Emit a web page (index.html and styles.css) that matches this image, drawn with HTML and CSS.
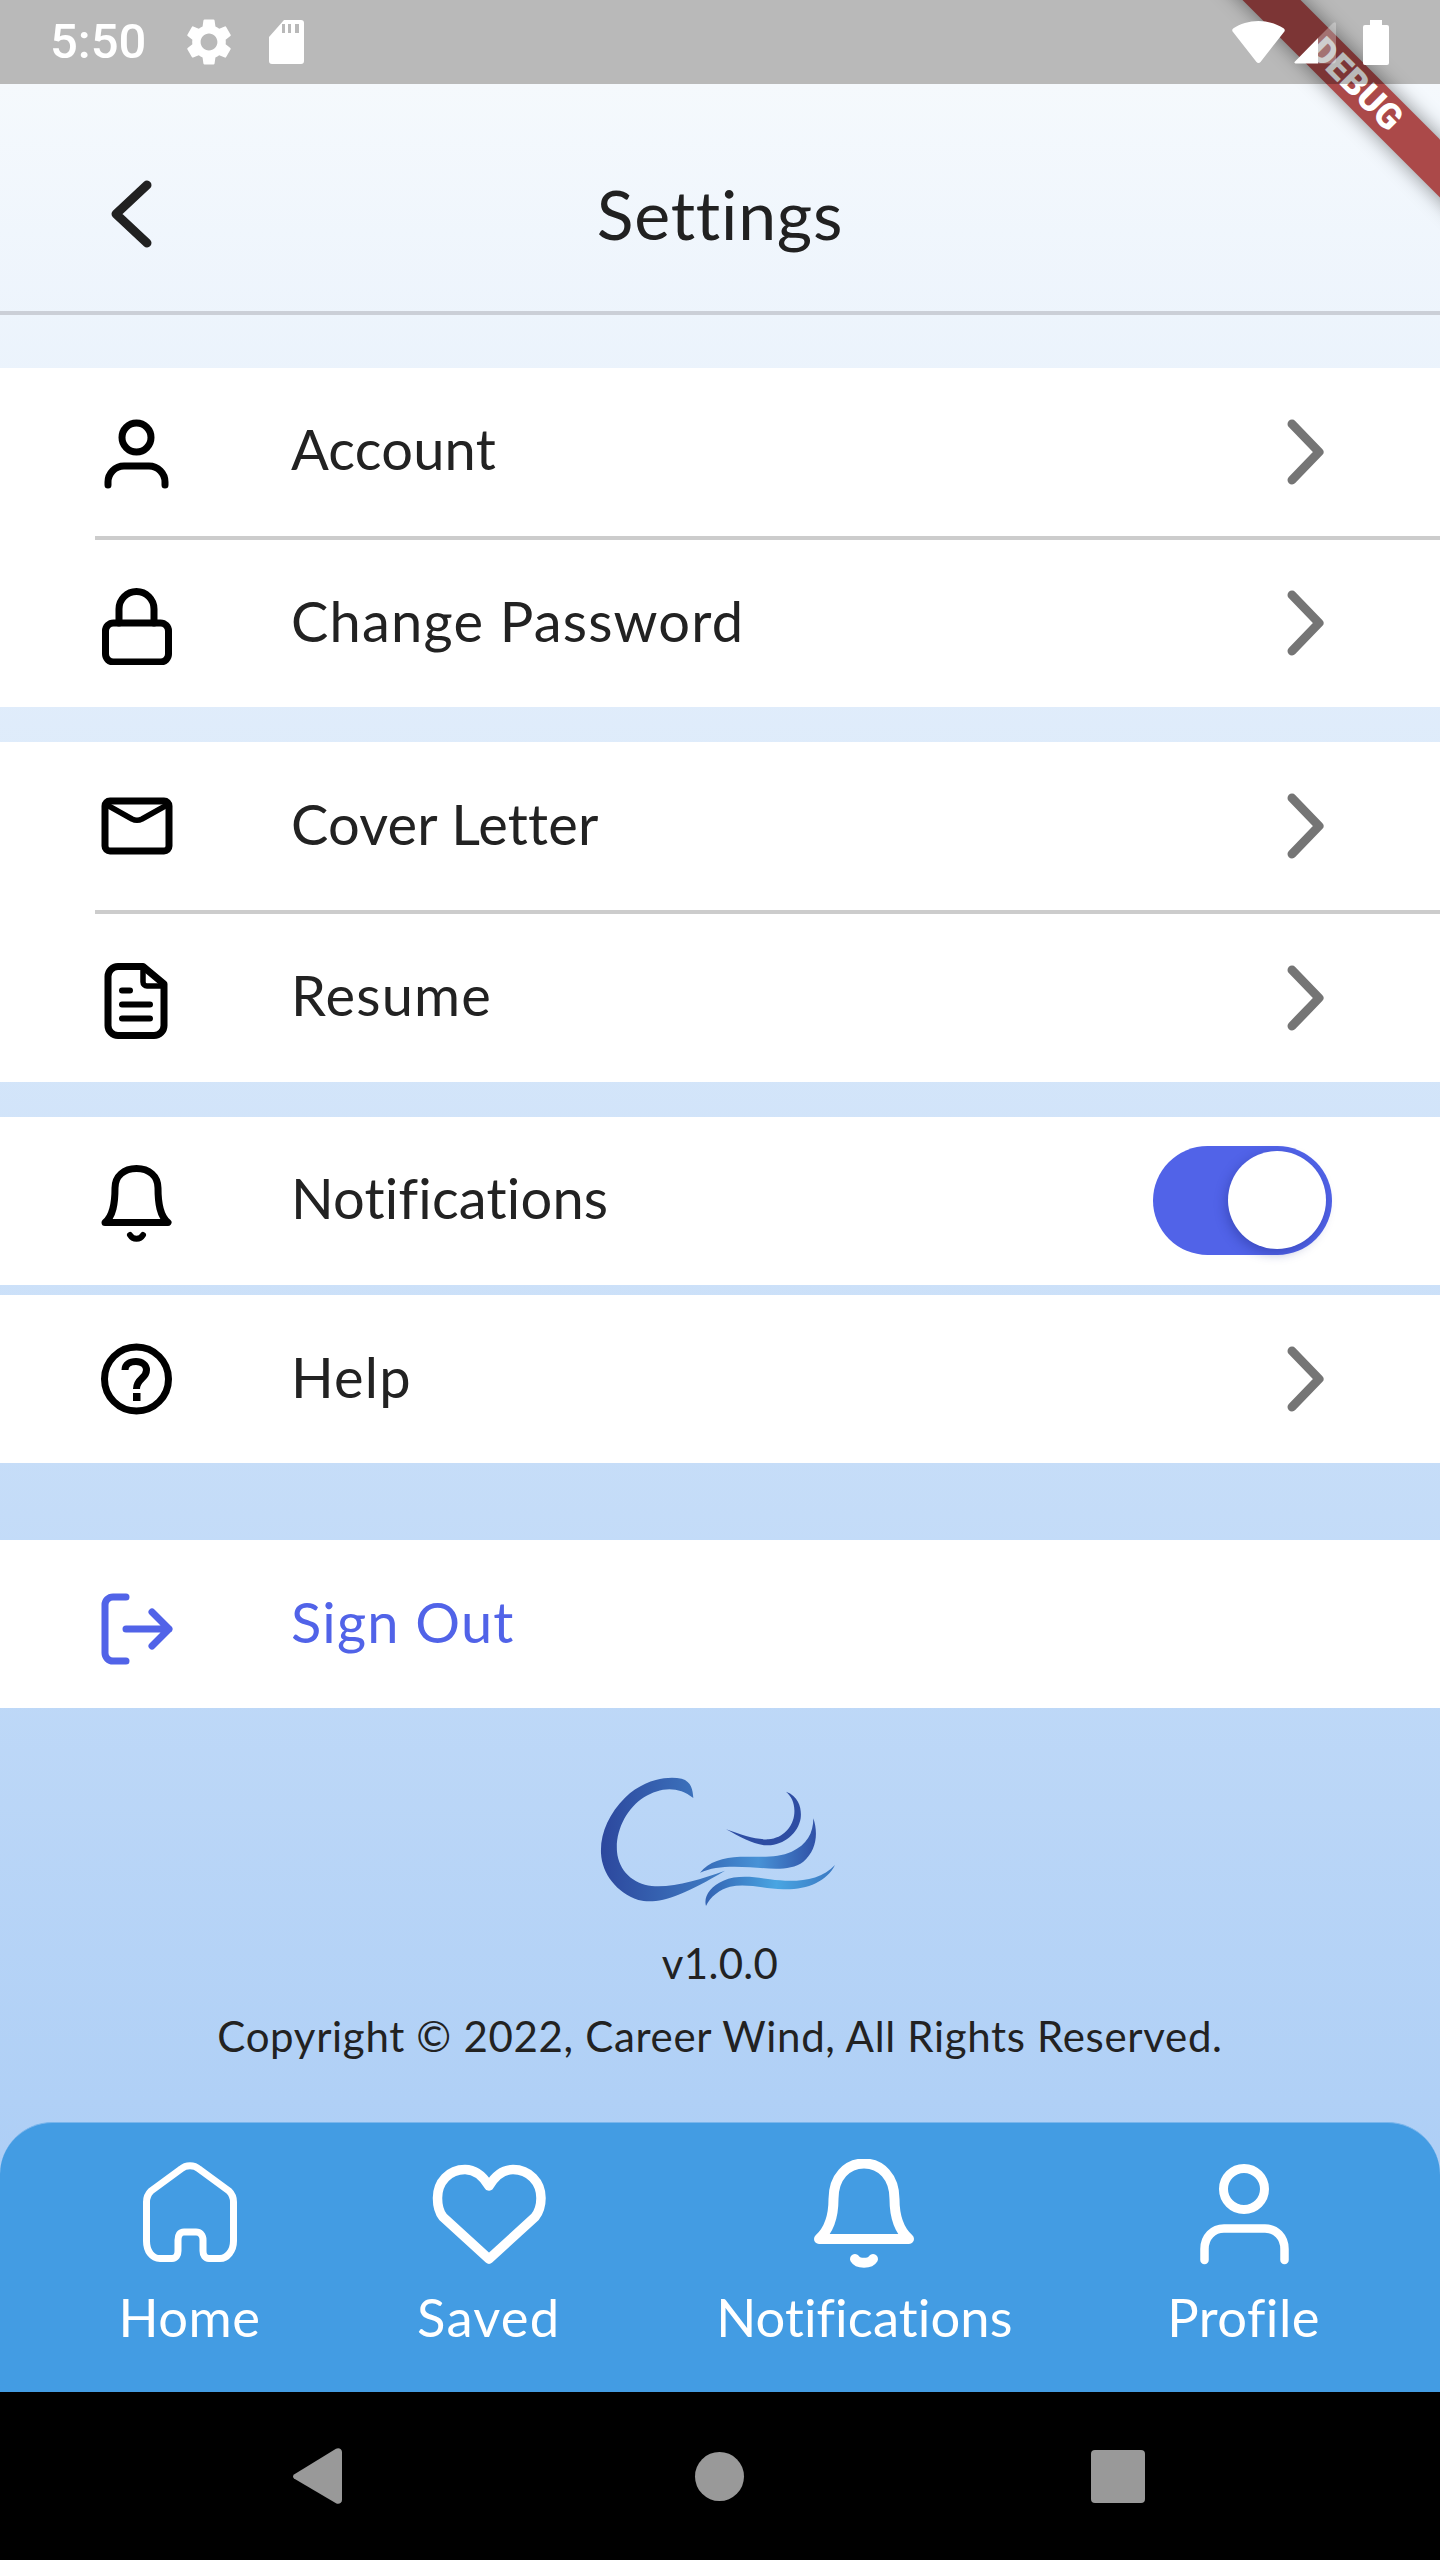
FILE: index.html
```html
<!DOCTYPE html>
<html lang="en">
<head>
<meta charset="utf-8">
<title>Settings</title>
<link rel="stylesheet" href="styles.css">
</head>
<body>
<div class="phone">
  <div class="debug-banner"><span>DEBUG</span></div>

  <div class="status">
    <span class="time">5:50</span>
    <svg class="gear" viewBox="0 0 24 24"><path fill="#fff" d="M19.14 12.94c.04-.3.06-.61.06-.94 0-.32-.02-.64-.07-.94l2.03-1.58a.49.49 0 0 0 .12-.61l-1.92-3.32a.488.488 0 0 0-.59-.22l-2.39.96c-.5-.38-1.03-.7-1.62-.94l-.36-2.54a.484.484 0 0 0-.48-.41h-3.84c-.24 0-.43.17-.47.41l-.36 2.54c-.59.24-1.13.57-1.62.94l-2.39-.96c-.22-.08-.47 0-.59.22L2.74 8.87c-.12.21-.08.47.12.61l2.03 1.58c-.05.3-.09.63-.09.94s.02.64.07.94l-2.03 1.58a.49.49 0 0 0-.12.61l1.92 3.32c.12.22.37.29.59.22l2.39-.96c.5.38 1.03.7 1.62.94l.36 2.54c.05.24.24.41.48.41h3.84c.24 0 .44-.17.47-.41l.36-2.54c.59-.24 1.13-.56 1.62-.94l2.39.96c.22.08.47 0 .59-.22l1.92-3.32c.12-.22.07-.47-.12-.61l-2.01-1.58zM12 15.6c-1.98 0-3.6-1.62-3.6-3.6s1.62-3.6 3.6-3.6 3.6 1.62 3.6 3.6-1.62 3.6-3.6 3.6z"/></svg>
    <svg class="sd" viewBox="0 0 35 44"><path fill="#fff" fill-rule="evenodd" d="M15 0H32Q35 0 35 3V41Q35 44 32 44H3Q0 44 0 41V17ZM13 4V13H16V4ZM19 4V13H22V4ZM26 4V13H30V4Z"/></svg>
    <span class="status-right">
      <svg class="wifi" viewBox="0 0 53 42"><path fill="#fff" d="M1 11C-.2 9.800 0 8 1.500 7.200C8 3 17 0 26.500 0C36 0 45 3 51.500 7.200C53 8 53.200 9.800 52 11L28.500 41C27.500 42.300 25.500 42.300 24.500 41Z"/></svg>
      <svg class="signal" viewBox="0 0 42 42"><path fill="#fff" d="M24 16L1 39.500Q-.5 41 1.500 41.500H24Z"/><path fill="#fff" opacity=".3" d="M24 16L39 1Q42 -1 42 2V38Q42 41.500 39 41.500H24Z"/></svg>
      <svg class="battery" viewBox="0 0 26 45"><path fill="#fff" d="M7 0H19V5H24Q26 5 26 7V43Q26 45 24 45H2Q0 45 0 43V7Q0 5 2 5H7Z"/></svg>
    </span>
  </div>

  <div class="screen">
    <header class="topbar">
      <svg class="back" viewBox="0 0 84 84"><path d="M57 13L26 42L57 71" fill="none" stroke="#212121" stroke-width="9" stroke-linecap="round" stroke-linejoin="round"/></svg>
      <h1 class="title">Settings</h1>
    </header>

    <section class="group group-first">
      <div class="row">
        <svg class="row-icon" viewBox="0 0 84 84"><g class="line"><circle cx="42.500" cy="27.500" r="14.500"/><path d="M14 75V72a16 16 0 0 1 16-16H55a16 16 0 0 1 16 16V75"/></g></svg>
        <span class="row-label row-label-tight">Account</span>
        <svg class="chevron" viewBox="0 0 84 84"><path d="M29 14L56 42L29 70"/></svg>
      </div>
      <div class="rule"></div>
      <div class="row">
        <svg class="row-icon" viewBox="0 0 84 84"><g class="line"><rect x="11.500" y="42" width="63" height="39" rx="8"/><path d="M25 42V28a17.500 17.500 0 0 1 35 0V42"/></g></svg>
        <span class="row-label">Change Password</span>
        <svg class="chevron" viewBox="0 0 84 84"><path d="M29 14L56 42L29 70"/></svg>
      </div>
    </section>

    <section class="group group-cv">
      <div class="row">
        <svg class="row-icon" viewBox="0 0 84 84"><g class="line"><rect x="11" y="17" width="64" height="50" rx="5"/><path d="M13 21L38 35Q43 37.500 48 35L73 21" stroke-width="5.500"/></g></svg>
        <span class="row-label row-label-tight">Cover Letter</span>
        <svg class="chevron" viewBox="0 0 84 84"><path d="M29 14L56 42L29 70"/></svg>
      </div>
      <div class="rule"></div>
      <div class="row">
        <svg class="row-icon" viewBox="0 0 84 84"><g class="line"><path d="M49 10.500H24a10 10 0 0 0-10 10V69.500a10 10 0 0 0 10 10H60a10 10 0 0 0 10-10V28Z"/><path d="M49 11V26a4 4 0 0 0 4 4H69" stroke-width="5.500"/><path d="M28 34.500H36M28 48.500H56M28 62.500H56" stroke-width="6"/></g></svg>
        <span class="row-label">Resume</span>
        <svg class="chevron" viewBox="0 0 84 84"><path d="M29 14L56 42L29 70"/></svg>
      </div>
    </section>

    <section class="group group-notify">
      <div class="row">
        <svg class="row-icon" viewBox="0 0 84 84"><g class="line"><path d="M21 29C21 17 30 9.500 42.500 9.500C55 9.500 64 17 64 29C64 45 66 57 74 63.500H11C19 57 21 45 21 29Z"/><path d="M36 76C39 81 46 81 49 76" stroke-width="6"/></g></svg>
        <span class="row-label row-label-tight">Notifications</span>
        <span class="toggle"><span class="knob"></span></span>
      </div>
    </section>

    <section class="group group-help">
      <div class="row">
        <svg class="row-icon" viewBox="0 0 84 84"><g class="line"><circle cx="42.500" cy="42" r="32"/><path d="M31 33C31 27.500 36 24.500 42 24.500C48 24.500 52.500 28 52.500 33C52.500 42 42.500 41 42.500 52" stroke-linecap="butt"/></g><rect x="39" y="56" width="7.500" height="8"/></svg>
        <span class="row-label">Help</span>
        <svg class="chevron" viewBox="0 0 84 84"><path d="M29 14L56 42L29 70"/></svg>
      </div>
    </section>

    <section class="group group-out">
      <div class="row">
        <svg class="row-icon" viewBox="0 0 84 84"><g class="line line-accent"><path d="M32 15H19a8 8 0 0 0-8 8V71a8 8 0 0 0 8 8H32"/><path d="M32 47H75M58 30L75 47L58 64"/></g></svg>
        <span class="row-label row-label-accent">Sign Out</span>
      </div>
    </section>

    <footer class="about">
      <svg class="logo" viewBox="0 0 960 540">
        <defs>
          <linearGradient id="lgC" x1="120" x2="500" y1="0" y2="0" gradientUnits="userSpaceOnUse"><stop offset="0" stop-color="#2c479d"/><stop offset="1" stop-color="#4180c6"/></linearGradient>
          <linearGradient id="lgB" x1="420" x2="770" y1="0" y2="0" gradientUnits="userSpaceOnUse"><stop offset="0" stop-color="#3669b6"/><stop offset=".5" stop-color="#4792d6"/><stop offset="1" stop-color="#3050a6"/></linearGradient>
          <linearGradient id="lgD" x1="435" x2="825" y1="0" y2="0" gradientUnits="userSpaceOnUse"><stop offset="0" stop-color="#3362b2"/><stop offset=".55" stop-color="#49a5e2"/><stop offset="1" stop-color="#3a78c2"/></linearGradient>
        </defs>
        <path fill="url(#lgC)" d="M400 174C398 150 395 125 365 116C320 106 250 120 195 173C148 220 120 280 123 340C126 402 170 458 235 480C292 494 360 472 495 392C420 418 340 444 275 438C220 432 176 392 171 335C166 272 200 205 252 172C300 142 352 136 400 174Z"/>
        <path fill="#2e4da3" d="M678 155C720 170 725 210 722 235C715 280 670 318 620 316C580 315 540 290 498 268C545 285 590 300 625 298C670 295 700 260 703 220C705 190 695 170 678 155Z"/>
        <path fill="url(#lgB)" d="M760 235C775 280 770 330 730 365C690 395 630 385 570 382C510 378 460 380 420 398C445 365 490 352 540 350C590 350 650 355 695 335C740 315 760 280 760 235Z"/>
        <path fill="url(#lgD)" d="M825 375C800 425 740 450 670 448C610 445 560 430 510 440C480 448 450 470 438 498C430 470 450 440 490 422C530 405 580 410 630 418C700 428 780 425 825 375Z"/>
      </svg>
      <p class="version">v1.0.0</p>
      <p class="copyright">Copyright © 2022, Career Wind, All Rights Reserved.</p>
    </footer>

    <nav class="tabs">
      <div class="tab">
        <svg class="tab-icon tab-home" viewBox="0 0 100 115"><path class="tab-line" stroke-width="7" d="M6.500 43C6.500 38 8 35 11 32L41 10C46 5.500 54 5.500 59 10L89 32C92 35 93.500 38 93.500 43V82C93.500 92 87 99.500 80 99.500H69C65 99.500 63 96 63 92V81C63 76 60 73 56 73H44C40 73 38 76 38 81V92C38 96 36 99.500 32 99.500H20C12 99.500 6.500 92 6.500 82Z"/></svg>
        <span class="tab-label">Home</span>
      </div>
      <div class="tab">
        <svg class="tab-icon tab-heart" viewBox="0 0 118 115"><path class="tab-line" stroke-width="9.500" d="M59 27C65 17 73 10.500 83 10.500C99 10.500 111 23 111 39C111 47 109 53 105 58L59 100L13 58C9 53 7.500 47 7.500 39C7.500 23 19 10.500 35 10.500C45 10.500 53 17 59 27Z"/></svg>
        <span class="tab-label tab-label-wide">Saved</span>
      </div>
      <div class="tab">
        <svg class="tab-icon tab-bell" viewBox="0 8 110 115"><path class="tab-line" stroke-width="10" d="M24.500 48C24.500 26 38 12.500 55 12.500C72 12.500 85.500 26 85.500 48C85.500 66 90 79 100 88H10C20 79 24.500 66 24.500 48Z"/><path class="tab-line" stroke-width="10" d="M46 108C49 113 61 113 64 108"/></svg>
        <span class="tab-label tab-label-tight">Notifications</span>
      </div>
      <div class="tab">
        <svg class="tab-icon tab-user" viewBox="0 0 100 115"><circle class="tab-line" stroke-width="9" cx="50" cy="30" r="20.500"/><path class="tab-line" stroke-width="8.500" d="M10.500 101V90C10.500 78 19 69.500 30 69.500H71C82 69.500 90.500 78 90.500 90V101"/></svg>
        <span class="tab-label">Profile</span>
      </div>
    </nav>
  </div>

  <div class="android">
    <svg class="nav-back" viewBox="0 0 49 56"><path fill="#999" d="M1 30.500C-.3 29.500 -.3 27.500 1 26.500L43 .8C45.500 -.6 49 .8 49 4V52C49 55.200 45.500 56.600 43 55.200Z"/></svg>
    <span class="nav-home"></span>
    <span class="nav-recent"></span>
  </div>
</div>
</body>
</html>
```

FILE: styles.css
```css
* { box-sizing: border-box; }
html, body { margin: 0; padding: 0; }
body {
  background: #fff;
  font-family: "Lato", "Noto Sans", sans-serif;
  font-variant-ligatures: none;
}

.phone {
  position: relative;
  width: 1440px;
  height: 2560px;
  overflow: hidden;
  display: flex;
  flex-direction: column;
  background: #fff;
}

/* Flutter debug ribbon: sits under the translucent status bar */
.debug-banner {
  position: absolute;
  z-index: 5;
  left: 1155.5px;
  top: 64px;
  width: 400px;
  height: 41px;
  transform: rotate(45deg);
  background: rgb(171, 73, 73);
  box-shadow: 0 0 20px rgba(0, 0, 0, .45);
  display: flex;
  align-items: center;
  justify-content: center;
  color: #fff;
  font: 900 35.7px/1 "Roboto", sans-serif;
}

.status {
  position: relative;
  z-index: 6;
  flex: none;
  height: 84px;
  padding: 0 51px 0 50px;
  display: flex;
  align-items: center;
  background: rgba(0, 0, 0, .275);
}
.time { width: 95px; color: #fff; font: 500 49px/84px "Roboto", sans-serif; white-space: nowrap; }
.gear { width: 56px; height: 56px; margin-left: 36px; flex: none; }
.sd { width: 35px; height: 44px; margin-left: 32px; flex: none; }
.status-right { margin-left: auto; display: flex; align-items: flex-end; height: 45px; }
.wifi { width: 53px; height: 42px; margin-bottom: 2px; }
.signal { width: 42px; height: 42px; margin-left: 9px; margin-bottom: 1px; }
.battery { width: 26px; height: 45px; margin-left: 27px; }

.screen {
  position: relative;
  flex: 1;
  display: flex;
  flex-direction: column;
  background: linear-gradient(180deg, #f5f9fd 0, #a6caf5 100%);
}

.topbar {
  flex: none;
  height: 231px;
  padding: 32px 0 0 90px;
  display: flex;
  align-items: center;
  position: relative;
  border-bottom: 4px solid #cbcfd7;
}
.back { width: 84px; height: 84px; flex: none; }
.title {
  flex: 1;
  margin: 0 0 0 -174px;
  text-align: center;
  font-size: 68px;
  font-weight: 400;
  letter-spacing: .8px;
  color: #212121;
  line-height: 84px;
}

.group { background: #fff; flex: none; }
.group-first { margin-top: 52.5px; }
.group-cv { margin-top: 35px; }
.group-notify { margin-top: 35px; }
.group-help { margin-top: 10.5px; }
.group-out { margin-top: 77px; }

.row {
  height: 168px;
  padding: 0 93px 0 94px;
  display: flex;
  align-items: center;
}
.row-icon { width: 84px; height: 84px; flex: none; }
.row-label {
  flex: 1;
  margin-left: 113px;
  font-size: 56px;
  letter-spacing: 1.2px;
  line-height: 76px;
  color: #222;
  padding-bottom: 5px;
}
.row-label-tight { letter-spacing: .2px; }
.row-label-accent { color: #5163e8; }
.rule { height: 4px; margin: 0 0 -.5px 94.5px; background: #ccc; }

.line { fill: none; stroke: #000; stroke-width: 7; stroke-linecap: round; stroke-linejoin: round; }
.line-accent { stroke: #5163e8; }
.chevron { width: 84px; height: 84px; flex: none; }
.chevron path { fill: none; stroke: #757575; stroke-width: 9; stroke-linecap: round; stroke-linejoin: round; }

.toggle {
  width: 179px;
  height: 108.5px;
  margin-right: 15px;
  flex: none;
  padding: 5px 6px;
  border-radius: 55px;
  background: #5163e8;
  display: flex;
  justify-content: flex-end;
}
.knob {
  width: 98px;
  height: 98px;
  border-radius: 50%;
  background: #fff;
  box-shadow: -2px 4px 12px rgba(30, 40, 130, .4);
}

.about {
  flex: none;
  padding-top: 32px;
  display: flex;
  flex-direction: column;
  align-items: center;
  color: #222;
  font-size: 42px;
  letter-spacing: .68px;
  line-height: 56px;
}
.logo { width: 320px; height: 180px; flex: none; }
.about p { margin: 0; }
.about .version { margin-top: 15px; letter-spacing: .3px; }
.about .copyright { margin-top: 17px; }

.tabs {
  position: absolute;
  left: 0;
  right: 0;
  bottom: 0;
  height: 270px;
  padding: 36px 119px 0;
  display: grid;
  grid-template-columns: 141px 144px 294px 151px;
  column-gap: 156.7px;
  align-items: start;
  background: #439ce3;
  border-top: 1px solid #79b5ec;
  border-radius: 52.5px 52.5px 0 0;
}
.tab { display: flex; flex-direction: column; align-items: center; }
.tab-icon { height: 115px; flex: none; }
.tab-home { width: 100px; }
.tab-heart { width: 118px; }
.tab-bell { width: 110px; }
.tab-user { width: 100px; }
.tab-line { fill: none; stroke: #fff; stroke-linecap: round; stroke-linejoin: round; }
.tab-label { color: #fff; font-size: 52.5px; letter-spacing: .5px; line-height: 70px; margin-top: 8px; white-space: nowrap; }
.tab-label-wide { letter-spacing: 1.2px; }
.tab-label-tight { letter-spacing: .1px; }

.android {
  flex: none;
  height: 168px;
  background: #000;
  padding-left: 293px;
  display: flex;
  align-items: center;
}
.nav-back { width: 49px; height: 56px; flex: none; }
.nav-home { width: 49px; height: 49px; border-radius: 50%; background: #999; margin-left: 353px; flex: none; }
.nav-recent { width: 54px; height: 53px; border-radius: 4px; background: #999; margin-left: 347px; flex: none; }
```
